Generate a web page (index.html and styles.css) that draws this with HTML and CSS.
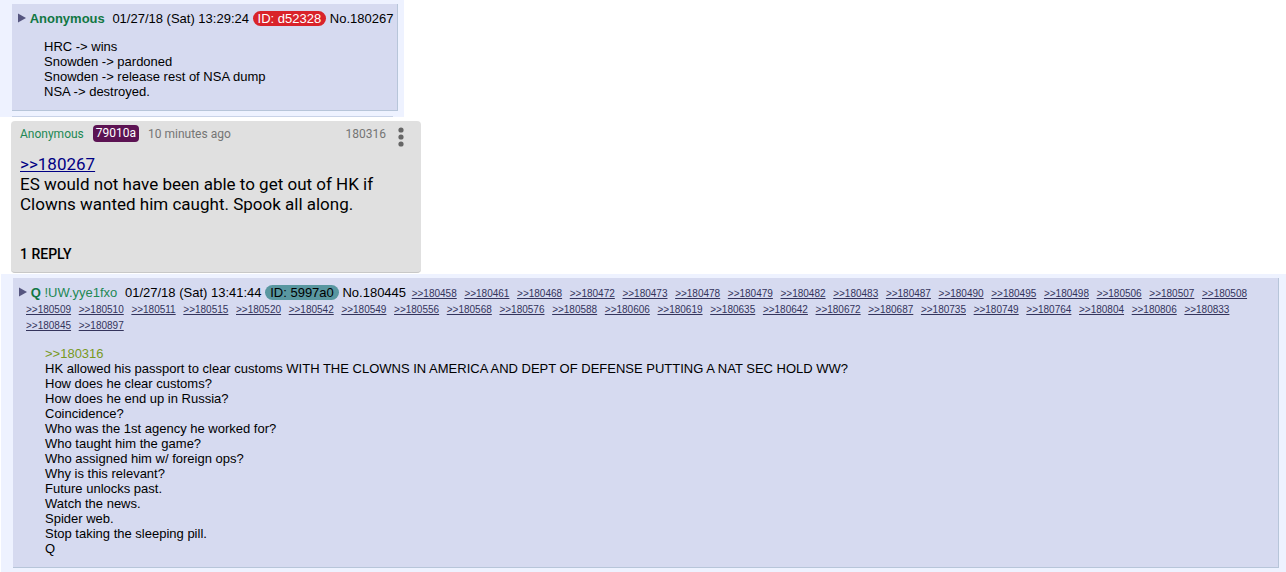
FILE: index.html
```html
<!DOCTYPE html>
<html lang="en">
<head>
<meta charset="utf-8">
<title>Thread</title>
<link rel="stylesheet" href="styles.css">
</head>
<body>
<main class="thread">
  <section class="board board-fit">
    <article class="post">
      <header class="post-head">
        <svg class="arrow" viewBox="0 0 9 10" aria-hidden="true"><path d="M0 0L9 5L0 10Z"/></svg>
        <span class="name">Anonymous</span>
        <time class="date">01/27/18 (Sat) 13:29:24</time>
        <span class="id id-red">ID: d52328</span>
        <span>No.180267</span>
      </header>
      <p class="post-body">HRC -&gt; wins<br>Snowden -&gt; pardoned<br>Snowden -&gt; release rest of NSA dump<br>NSA -&gt; destroyed.</p>
    </article>
    <div class="next-edge"></div>
  </section>

  <article class="card">
    <header class="card-head">
      <span class="card-name">Anonymous</span>
      <span class="card-id">79010a</span>
      <time>10 minutes ago</time>
      <span class="card-no">180316</span>
      <button class="menu" type="button" aria-label="Menu">
        <svg class="dots" viewBox="0 0 6 20" aria-hidden="true"><circle cx="3" cy="3" r="2.6"/><circle cx="3" cy="10" r="2.6"/><circle cx="3" cy="17" r="2.6"/></svg>
      </button>
    </header>
    <p class="card-body"><a class="card-link" href="#180267">&gt;&gt;180267</a><br>ES would not have been able to get out of HK if<br>Clowns wanted him caught. Spook all along.</p>
    <button class="replies" type="button">1 REPLY</button>
  </article>

  <section class="board board-wide">
    <article class="post">
      <header class="post-head post-head-wrap">
        <svg class="arrow" viewBox="0 0 9 10" aria-hidden="true"><path d="M0 0L9 5L0 10Z"/></svg>
        <span class="name">Q</span>
        <span class="trip">!UW.yye1fxo</span>
        <time class="date">01/27/18 (Sat) 13:41:44</time>
        <span class="id id-teal">ID: 5997a0</span>
        <span class="no">No.180445</span>
        <a class="back" href="#180458">&gt;&gt;180458</a>
        <a class="back" href="#180461">&gt;&gt;180461</a>
        <a class="back" href="#180468">&gt;&gt;180468</a>
        <a class="back" href="#180472">&gt;&gt;180472</a>
        <a class="back" href="#180473">&gt;&gt;180473</a>
        <a class="back" href="#180478">&gt;&gt;180478</a>
        <a class="back" href="#180479">&gt;&gt;180479</a>
        <a class="back" href="#180482">&gt;&gt;180482</a>
        <a class="back" href="#180483">&gt;&gt;180483</a>
        <a class="back" href="#180487">&gt;&gt;180487</a>
        <a class="back" href="#180490">&gt;&gt;180490</a>
        <a class="back" href="#180495">&gt;&gt;180495</a>
        <a class="back" href="#180498">&gt;&gt;180498</a>
        <a class="back" href="#180506">&gt;&gt;180506</a>
        <a class="back" href="#180507">&gt;&gt;180507</a>
        <a class="back" href="#180508">&gt;&gt;180508</a>
        <a class="back" href="#180509">&gt;&gt;180509</a>
        <a class="back" href="#180510">&gt;&gt;180510</a>
        <a class="back" href="#180511">&gt;&gt;180511</a>
        <a class="back" href="#180515">&gt;&gt;180515</a>
        <a class="back" href="#180520">&gt;&gt;180520</a>
        <a class="back" href="#180542">&gt;&gt;180542</a>
        <a class="back" href="#180549">&gt;&gt;180549</a>
        <a class="back" href="#180556">&gt;&gt;180556</a>
        <a class="back" href="#180568">&gt;&gt;180568</a>
        <a class="back" href="#180576">&gt;&gt;180576</a>
        <a class="back" href="#180588">&gt;&gt;180588</a>
        <a class="back" href="#180606">&gt;&gt;180606</a>
        <a class="back" href="#180619">&gt;&gt;180619</a>
        <a class="back" href="#180635">&gt;&gt;180635</a>
        <a class="back" href="#180642">&gt;&gt;180642</a>
        <a class="back" href="#180672">&gt;&gt;180672</a>
        <a class="back" href="#180687">&gt;&gt;180687</a>
        <a class="back" href="#180735">&gt;&gt;180735</a>
        <a class="back" href="#180749">&gt;&gt;180749</a>
        <a class="back" href="#180764">&gt;&gt;180764</a>
        <a class="back" href="#180804">&gt;&gt;180804</a>
        <a class="back" href="#180806">&gt;&gt;180806</a>
        <a class="back" href="#180833">&gt;&gt;180833</a>
        <a class="back" href="#180845">&gt;&gt;180845</a>
        <a class="back" href="#180897">&gt;&gt;180897</a>
      </header>
      <p class="post-body"><a class="quote" href="#180316">&gt;&gt;180316</a><br>HK allowed his passport to clear customs WITH THE CLOWNS IN AMERICA AND DEPT OF DEFENSE PUTTING A NAT SEC HOLD WW?<br>How does he clear customs?<br>How does he end up in Russia?<br>Coincidence?<br>Who was the 1st agency he worked for?<br>Who taught him the game?<br>Who assigned him w/ foreign ops?<br>Why is this relevant?<br>Future unlocks past.<br>Watch the news.<br>Spider web.<br>Stop taking the sleeping pill.<br>Q</p>
    </article>
  </section>
</main>
</body>
</html>
```

FILE: styles.css
```css
body {
  margin: 0;
  background: #fff;
  color: #000;
  font: 13px/15px "Liberation Sans", Arial, sans-serif;
}

p {
  margin: 0;
}

.board {
  background: #eef2ff;
}

.board-fit {
  width: fit-content;
  padding: 4px 6px 0 12px;
}

.board-wide {
  margin: 1px 0 0 1px;
  padding: 4px 7px 4px 12px;
}

.post {
  padding: 7px 4px 11px 6px;
  background: #d6daf0;
  border: solid #b7c5d9;
  border-width: 0 1px 1px 0;
}

.next-edge {
  margin: 5px 5px 0 0;
  border-bottom: 1px solid #c9d3e8;
}

.post-head {
  line-height: 16px;
}

.post-head-wrap {
  padding: 0 20px 1px 7px;
  text-indent: -7px;
}

.arrow {
  width: 8px;
  height: 10px;
  fill: #55557f;
}

.name {
  color: #117743;
  font-weight: bold;
}

.trip {
  color: #228854;
}

.date {
  margin-left: 4px;
}

.id {
  padding: 0 5px;
  border-radius: 8px;
}

.id-red {
  background: #d9232a;
  color: #fff;
}

.id-teal {
  background: #5997a0;
}

.no {
  margin-right: 2px;
}

.back {
  margin-right: 4px;
  color: #34345c;
  font-size: 10px;
  line-height: 12px;
}

.post-body {
  padding: 12px 26px 0;
}

.quote {
  color: #789922;
  text-decoration: none;
}

.card {
  box-sizing: border-box;
  max-width: 410px;
  margin: 4px 0 0 11px;
  padding: 4px 17px 8px 9px;
  background: #e0e0e0;
  border-bottom: 1px solid #c8c8c8;
  border-radius: 4px;
  font-family: Roboto, sans-serif;
}

.card-head {
  display: flex;
  align-items: flex-start;
  color: #757575;
  font-size: 12px;
  line-height: 18px;
}

.card-name {
  color: #228854;
}

.card-id {
  margin: 0 9px;
  padding: 0 3px;
  background: #5c1353;
  border-radius: 4px;
  color: #fff;
  line-height: 17px;
}

.card-no {
  margin-left: auto;
}

.menu,
.replies {
  padding: 0;
  border: 0;
  background: none;
  font: inherit;
}

.menu {
  margin: 2px 0 0 12px;
}

.dots {
  display: block;
  width: 6px;
  height: 20px;
  fill: #666;
}

.card-body {
  margin-top: 7px;
  font-size: 17px;
  line-height: 20px;
}

.card-link {
  color: #000084;
}

.replies {
  display: block;
  margin-top: 30px;
  color: #000;
  font-size: 14px;
  font-weight: 500;
  line-height: 20px;
}
```
